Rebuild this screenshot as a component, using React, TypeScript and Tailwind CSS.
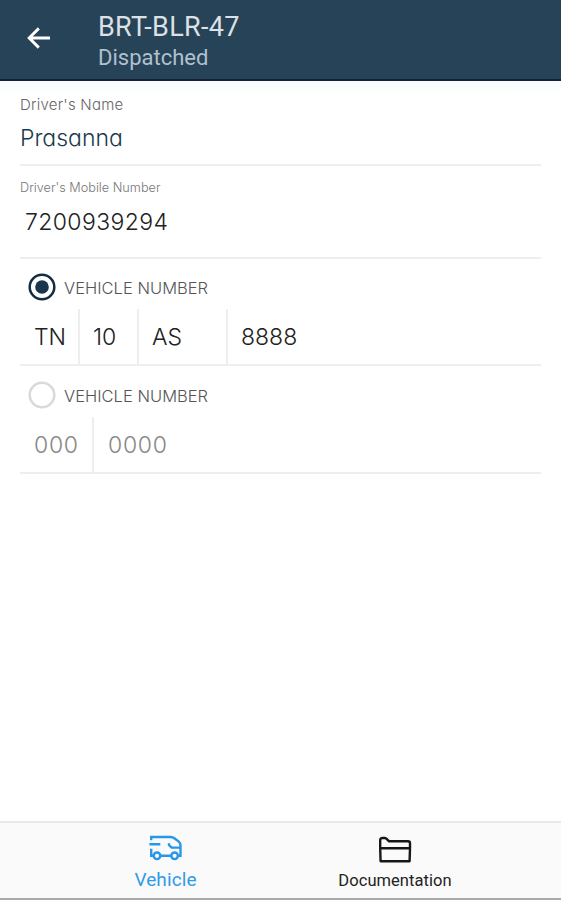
import React from "react";

const geometric = "font-['Inter',sans-serif] [font-feature-settings:'cv11','ss03']";

function ArrowBack() {
  return (
    <svg className="block h-[24px] w-[26px]" viewBox="0 0 26 24" fill="none" stroke="#fff" strokeWidth="2.9">
      <path d="M24 12H3M12.8 2.4 3.2 12l9.6 9.6" />
    </svg>
  );
}

function VanIcon() {
  return (
    <svg className="block h-[28px] w-[34px]" viewBox="0 0 34 28" fill="none" stroke="#2997e6" strokeWidth="2.4">
      <path d="M2.2 6.3V3H21.5Q24 3 25.4 4.3L29.8 7.6Q31.5 9 31.5 11.5V21.7H29M2.2 14.8V21.7H4.8M11.2 21.7H22.4M.4 10.3H11.3M31.1 13.6H22.6L20 11V9.2" />
      <circle cx="8" cy="21.8" r="3.3" />
      <circle cx="25.6" cy="21.8" r="3.3" />
    </svg>
  );
}

function FolderIcon() {
  return (
    <svg className="block h-[28px] w-[34px]" viewBox="0 0 34 28" fill="none" stroke="#171717" strokeWidth="2.4" strokeLinejoin="round">
      <path d="M2.2 12V4.2Q2.2 2 4.4 2H6.8Q8 2 8.9 3.2L10.8 5.2H30Q32 5.2 32 7.2V12" />
      <path d="M2.2 12.2H32L31.6 25.3H2.6Z" />
    </svg>
  );
}

function Radio({ checked }: { checked: boolean }) {
  return (
    <svg className="block size-[28px]" viewBox="0 0 28 28" fill="none">
      <circle cx="14" cy="14" r="12.3" stroke={checked ? "#142c3f" : "#d9d9d9"} strokeWidth="2.5" />
      {checked && <circle cx="14" cy="14" r="6.8" fill="#18374d" />}
    </svg>
  );
}

function VehicleHeading({ checked }: { checked: boolean }) {
  return (
    <div className="flex h-[28px] items-center pl-2">
      <Radio checked={checked} />
      <span className={`${geometric} ml-[8px] pt-[2px] text-[16.5px] font-light tracking-[0.02px] text-[#555]`}>VEHICLE NUMBER</span>
    </div>
  );
}

export default function App() {
  return (
    <div className="flex h-[900px] w-[561px] flex-col overflow-hidden bg-white font-['Roboto',sans-serif]">
      <header className="flex h-[81px] shrink-0 border-b-2 border-[#10233b] bg-[#264358]">
        <button className="ml-[26px] mt-[26px] h-[24px]" aria-label="Back"><ArrowBack /></button>
        <div className="ml-[46px] pt-[12px] whitespace-nowrap">
          <h1 className="h-[30px] text-[27px] leading-[30px] tracking-[0.3px] text-[#dce1e5]">BRT-BLR-47</h1>
          <p className="h-[32px] text-[22px] leading-[32px] text-[#b0c0ce]">Dispatched</p>
        </div>
      </header>

      <main className="flex grow flex-col bg-gradient-to-b from-[#f8fcfd] to-white to-[14px] pl-[20px] pr-[20px] whitespace-nowrap">
        <section className="h-[85px] border-b-2 border-[#eeeeee] pt-[14px]">
          <div className={`${geometric} h-5 text-[15px] leading-5 font-light tracking-[0.23px] text-[#666]`}>Driver's Name</div>
          <div className={`${geometric} mt-[8px] h-[30px] text-[23px] leading-[30px] font-light text-[#173a4c]`}>Prasanna</div>
        </section>
        <section className="h-[93px] border-b-2 border-[#eeeeee] pt-[12px]">
          <div className={`${geometric} h-5 text-[12.7px] leading-5 font-light text-[#777]`}>Driver's Mobile Number</div>
          <div className={`${geometric} mt-[9px] h-[30px] pl-[5px] text-[23px] leading-[30px] font-light tracking-[0.38px] text-[#222]`}>7200939294</div>
        </section>
        <section className="h-[107px] border-b-2 border-[#eeeeee] pt-[14px]">
          <VehicleHeading checked />
          <div className={`${geometric} mt-[8px] flex h-[55px] text-[23px] leading-[56px] font-light text-[#222]`}>
            <span className="w-[60px] border-r-2 border-[#eeeeee] pl-[14px]">TN</span>
            <span className="w-[59px] border-r-2 border-[#eeeeee] pl-[13px]">10</span>
            <span className="w-[89px] border-r-2 border-[#eeeeee] pl-[13px]">AS</span>
            <span className="pl-[13px]">8888</span>
          </div>
        </section>
        <section className="h-[108px] border-b-2 border-[#eeeeee] pt-[15px]">
          <VehicleHeading checked={false} />
          <div className={`${geometric} mt-[8px] flex h-[55px] text-[23px] leading-[56px] font-light tracking-[0.7px] text-[#888]`}>
            <span className="w-[74px] border-r-2 border-[#eeeeee] pl-[14px]">000</span>
            <span className="pl-[14px]">0000</span>
          </div>
        </section>
      </main>

      <nav className="flex h-[79px] shrink-0 border-t-2 border-b-2 border-t-[#eaeaea] border-b-[#aaa] bg-[#fafafa] pl-[51px] pr-[51px]">
        <button className="flex w-[229px] flex-col items-center pt-[11px] text-[#2f9be9]">
          <VanIcon />
          <span className="mt-[6px] text-[19px] leading-[24px] tracking-[0.1px]">Vehicle</span>
        </button>
        <button className="flex w-[230px] flex-col items-center pt-[13px] text-[#222]">
          <FolderIcon />
          <span className="mt-[5px] text-[16.5px] leading-[24px] tracking-[0.05px]">Documentation</span>
        </button>
      </nav>
    </div>
  );
}
